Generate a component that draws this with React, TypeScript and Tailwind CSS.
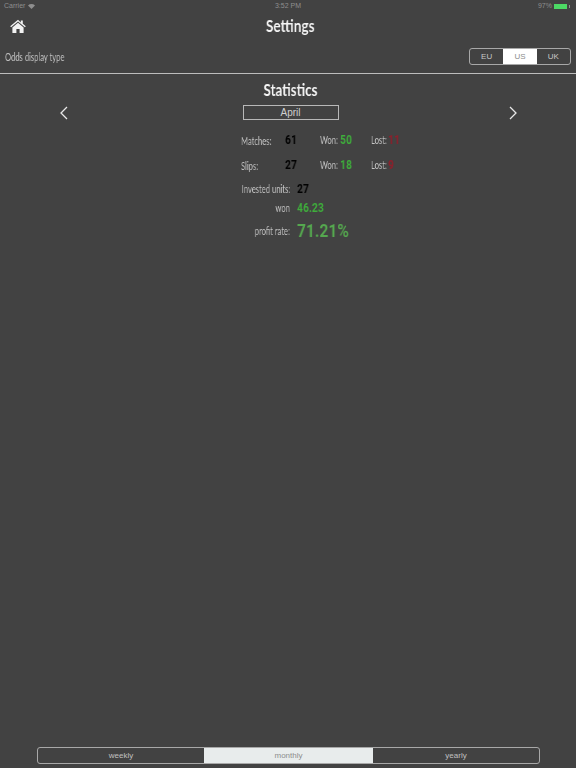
import React, { useState } from "react";

function Chevron({ flip }: { flip?: boolean }) {
  return (
    <svg width="8" height="14" viewBox="0 0 8 14" fill="none" stroke="#e8e8e8" strokeWidth="1.3" className={flip ? "rotate-180" : ""}>
      <path d="M7 1 1 7l6 6" />
    </svg>
  );
}

function Home() {
  return (
    <svg width="16" height="14" viewBox="0 0 16 14" fill="#f2f2f2">
      <path d="M8 0.8 0.2 7.2l0.9 1L8 2.6l6.9 5.6 0.9-1-3-2.4V1.4h-2v2.2z" />
      <path d="M8 3.8 2.4 8.4V14h4V10h3.2v4h4V8.4z" />
    </svg>
  );
}

// the reference uses a condensed face, so Lato gets squeezed horizontally
function Label({ children, className }: { children: React.ReactNode; className?: string }) {
  return (
    <span className={`block whitespace-nowrap text-[11px] leading-[14px] text-[#c4c4c4] font-['Lato',sans-serif] scale-x-[.69] will-change-transform ${className ?? "origin-left"}`}>
      {children}
    </span>
  );
}

function Num({ value, color }: { value: string; color: string }) {
  return (
    <span className={`block origin-left scale-x-[.86] text-[12px] leading-[14px] font-bold font-['Roboto',sans-serif] will-change-transform ${color}`}>
      {value}
    </span>
  );
}

function Stat({ label, labelWidth, value, color, className }: { label: string; labelWidth: string; value: string; color: string; className?: string }) {
  return (
    <div className={`flex items-center ${className ?? ""}`}>
      <div className={labelWidth}>
        <Label>{label}</Label>
      </div>
      <Num value={value} color={color} />
    </div>
  );
}

export default function App() {
  const [odds, setOdds] = useState("US");
  const [range, setRange] = useState("monthly");

  return (
    <div className="h-[768px] w-[576px] overflow-hidden bg-[#424242] flex flex-col font-['Lato',sans-serif]">
      {/* Status bar */}
      <div className="h-[12px] px-[4px] flex items-center justify-between text-[7px] text-[#8e8e8e] font-['Liberation_Sans',sans-serif]">
        <div className="flex items-center gap-[3px] w-[100px]">
          <span>Carrier</span>
          <svg width="7" height="5" viewBox="0 0 14 10" fill="#8e8e8e">
            <path d="M7 10 0 3a10 10 0 0 1 14 0z" />
          </svg>
        </div>
        <span>3:52 PM</span>
        <div className="flex items-center justify-end gap-[2px] w-[100px] pr-[2px]">
          <span>97%</span>
          <div className="w-[13px] h-[5px] bg-[#4cd964]" />
          <div className="w-[1px] h-[3px] bg-[#8e8e8e]" />
        </div>
      </div>

      {/* Header */}
      <div className="h-[28px] relative flex items-center justify-center">
        <div className="absolute left-[10px] top-[7px]">
          <Home />
        </div>
        <h1 className="text-[17.5px] font-bold text-[#f4f4f4] ml-[4px] scale-x-[.78] will-change-transform">Settings</h1>
      </div>

      {/* Odds row */}
      <div className="h-[33px] pl-[5px] pr-[5px] flex items-center justify-between border-b border-[#bdbdbd] box-content">
        <div className="mt-[1px]">
          <Label>Odds display type</Label>
        </div>
        <div className="flex h-[17px] w-[102px] border border-[#a8a8a8] rounded-[3px] overflow-hidden font-['Liberation_Sans',sans-serif] text-[8px] text-[#c8c8c8]">
          {["EU", "US", "UK"].map((o) => (
            <button
              key={o}
              onClick={() => setOdds(o)}
              className={`flex-1 flex items-center justify-center ${odds === o ? "bg-white text-[#8c8c8c]" : ""}`}
            >
              {o}
            </button>
          ))}
        </div>
      </div>

      {/* Statistics */}
      <h2 className="text-[17.5px] font-bold text-[#f4f4f4] text-center mt-[6px] ml-[5px] leading-[20px] scale-x-[.76] will-change-transform">Statistics</h2>
      <div className="flex items-center justify-between mt-[5px] pl-[60px] pr-[59px]">
        <Chevron />
        <div className="ml-[4px] w-[96px] h-[15px] border border-[#b8b8b8] flex items-center justify-center text-[10px] text-[#d0d0d0] font-['Liberation_Sans',sans-serif]">
          April
        </div>
        <Chevron flip />
      </div>

      <div className="ml-[241px] mt-[12px] flex flex-col">
        <div className="h-[16px] flex items-center">
          <div className="w-[44px] mt-[2px]">
            <Label>Matches:</Label>
          </div>
          <div className="w-[35px]">
            <Num value="61" color="text-black" />
          </div>
          <Stat label="Won:" labelWidth="w-[20px]" value="50" color="text-[#3fae3c]" className="w-[51px]" />
          <Stat label="Lost:" labelWidth="w-[17px]" value="11" color="text-[#8f1f2b]" />
        </div>
        <div className="h-[16px] mt-[9px] flex items-center">
          <div className="w-[44px] mt-[2px]">
            <Label>Slips:</Label>
          </div>
          <div className="w-[35px]">
            <Num value="27" color="text-black" />
          </div>
          <Stat label="Won:" labelWidth="w-[20px]" value="18" color="text-[#3fae3c]" className="w-[51px]" />
          <Stat label="Lost:" labelWidth="w-[17px]" value="9" color="text-[#8f1f2b]" />
        </div>
        <div className="h-[16px] mt-[8px] flex items-center gap-[7px]">
          <div className="w-[49px] flex justify-end">
            <Label className="origin-right">Invested units:</Label>
          </div>
          <Num value="27" color="text-black" />
        </div>
        <div className="h-[16px] mt-[3px] flex items-center gap-[7px]">
          <div className="w-[49px] flex justify-end">
            <Label className="origin-right">won</Label>
          </div>
          <Num value="46.23" color="text-[#3fae3c]" />
        </div>
        <div className="h-[24px] mt-[3px] flex items-center gap-[7px]">
          <div className="w-[49px] flex justify-end">
            <Label className="origin-right">profit rate:</Label>
          </div>
          <span className="block origin-left scale-x-[.89] text-[17.5px] font-bold font-['Roboto',sans-serif] text-[#55a84f] will-change-transform">71.21%</span>
        </div>
      </div>

      {/* Range tabs */}
      <div className="mt-auto mb-[4px] ml-[37px] w-[503px] h-[17px] grid grid-cols-[166px_169px_1fr] border border-[#a8a8a8] rounded-[3px] overflow-hidden font-['Liberation_Sans',sans-serif] text-[8px] text-[#c0c0c0]">
        {["weekly", "monthly", "yearly"].map((r) => (
          <button
            key={r}
            onClick={() => setRange(r)}
            className={`flex items-center justify-center ${range === r ? "bg-[#e8ecec] text-[#8c8c8c]" : ""}`}
          >
            {r}
          </button>
        ))}
      </div>
    </div>
  );
}
